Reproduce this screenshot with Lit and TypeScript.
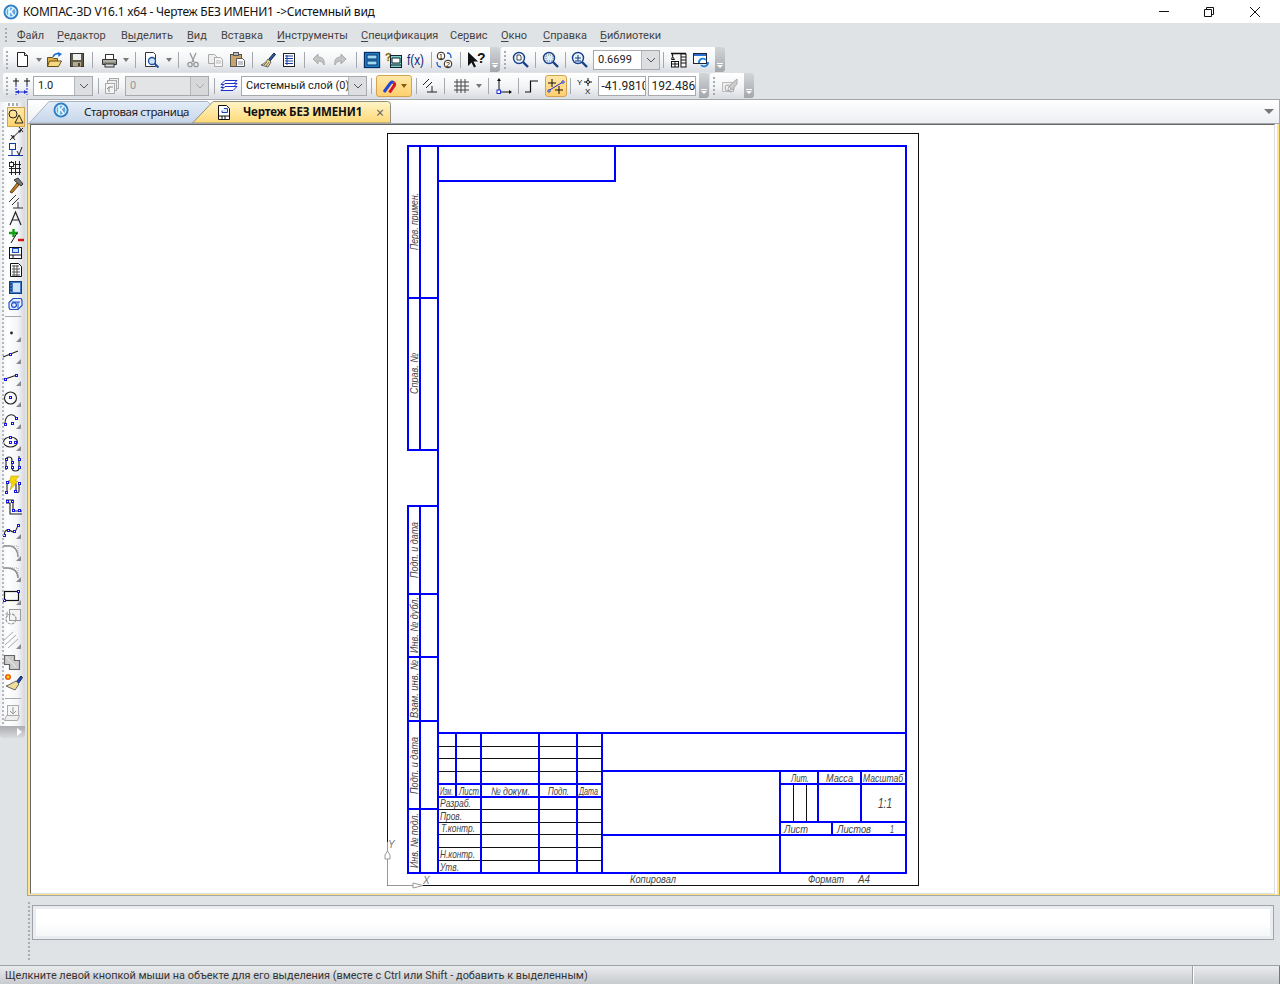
import { css, html, svg, LitElement, type TemplateResult, type SVGTemplateResult } from "lit";
import { customElement } from "lit/decorators.js";

type Cell = [number, number, TemplateResult | SVGTemplateResult];

const ico = (body: SVGTemplateResult, w = 16, h = 16) =>
    html`<svg class="ico" width=${w} height=${h} viewBox="0 0 ${w} ${h}">${body}</svg>`;

const sep = (c: number): Cell => [c, 1, html`<i class="sep"></i>`];
const drop = (c: number): Cell => [c, 7, html`<i class="drop"></i>`];
const grip = (c: number): Cell => [c, 2, html`<i class="grip"></i>`];
const cell = (c: number, body: SVGTemplateResult, w = 18): Cell => [c, w, ico(body, w, 18)];

// lays cells along a row by their centre x
function place(start: number, cells: Cell[]) {
    let prev = start;
    return cells.map(([c, w, t]) => {
        const left = c - w / 2 - prev;
        prev = c + w / 2;
        return html`<span class="cell" style="margin-left:${left}px;width:${w}px">${t}</span>`;
    });
}

const logo = html`<svg width="16" height="16" viewBox="0 0 16 16">
    <circle cx="8" cy="8" r="7.5" fill="#2f7fc4"/><circle cx="8" cy="8" r="5.6" fill="#5ba6dd"/>
    <circle cx="8" cy="8" r="5" fill="none" stroke="#fff" stroke-width="1"/>
    <text x="8" y="11.5" text-anchor="middle" font-family="Liberation Sans" font-weight="700" font-size="10" fill="#fff">K</text>
</svg>`;

const bodies = {
    file: svg`<path d="M3.5 1.5h7l3 3v11h-10z" fill="#fff" stroke="#222"/><path d="M10.5 1.5v3h3" fill="#ddd" stroke="#222"/>`,
    open: svg`<path d="M1.5 6.5h5l1 1h4v8h-10z" fill="#dcb24c" stroke="#6a4d10"/><path d="M3.5 10h12l-3 5.5h-11z" fill="#f6d985" stroke="#6a4d10"/><path d="M7 6c1-3 4-4 6.500-3" stroke="#1c6fd4" stroke-width="1.600" fill="none"/><path d="M16 3l-3.500 3-.5-5z" fill="#1c6fd4"/>`,
    save: svg`<rect x="1.500" y="2.500" width="13" height="13" fill="#5d5d4c" stroke="#333"/><rect x="4" y="3" width="8" height="6" fill="#eee"/><rect x="4" y="11" width="8" height="4.500" fill="#b8a888"/><rect x="9" y="12" width="2" height="3" fill="#444"/>`,
    print: svg`<rect x="4.500" y="3.500" width="8" height="5" fill="#fff" stroke="#333"/><path d="M1.500 8.500h14v5h-14z" fill="#8f8f84" stroke="#333"/><path d="M2 9.500h13v1H2z" fill="#cfcfc4"/><rect x="4" y="13" width="9" height="3" fill="#ddd" stroke="#333"/>`,
    preview: svg`<path d="M2.500 1.500h8l2 2v12h-10z" fill="#fff" stroke="#333"/><circle cx="9" cy="10" r="3.500" fill="#cfe6fa" stroke="#1f4f9e" stroke-width="1.300"/><path d="M11.500 12.500l4 4" stroke="#1f4f9e" stroke-width="2"/>`,
    cut: svg`<path d="M6 2l4 9M12 2L8 11" stroke="#9a9a9a" stroke-width="1.300" fill="none"/><circle cx="6" cy="13.500" r="2.200" fill="none" stroke="#9a9a9a" stroke-width="1.300"/><circle cx="12" cy="13.500" r="2.200" fill="none" stroke="#9a9a9a" stroke-width="1.300"/>`,
    copy: svg`<path d="M1.500 3.500h6l2 2v7h-8z" fill="#eee" stroke="#aaa"/><path d="M7.500 6.500h6l2 2v7h-8z" fill="#f6f6f6" stroke="#aaa"/><path d="M9 10h5M9 12h5" stroke="#bbb"/>`,
    paste: svg`<rect x="1.500" y="3.500" width="11" height="12" fill="#c9a36a" stroke="#555"/><rect x="4.500" y="1.500" width="5" height="3" fill="#bbb" stroke="#555"/><path d="M7.500 7.500h6l2 2v6h-8z" fill="#fff" stroke="#555"/><path d="M9 11h5M9 13h5" stroke="#889"/>`,
    brush: svg`<path d="M9 9l6-7 1.500 1.500L11 10z" fill="#2a5fb0" stroke="#123"/><path d="M9 8l3 3-3 5-7-2c3-1 5-3 7-6z" fill="#f1d67a" stroke="#666"/><path d="M5 14l3-3M7 15l3-4" stroke="#777"/>`,
    table: svg`<rect x="2.500" y="2.500" width="11" height="13" fill="#fff" stroke="#222"/><path d="M4 5h8M4 7.500h8M4 10h8M4 12.500h8" stroke="#1b3fa0"/><path d="M6 4v10" stroke="#1b3fa0"/>`,
    undo: svg`<path d="M2 8l5-5v3c5 0 7 3 6 8-1-3-3-4-6-4v3z" fill="#c4c4c4" stroke="#aaa"/>`,
    redo: svg`<path d="M14 8L9 3v3c-5 0-7 3-6 8 1-3 3-4 6-4v3z" fill="#c4c4c4" stroke="#aaa"/>`,
    cabinet: svg`<rect x="1.500" y="1.500" width="15" height="15" fill="#1d8fd0" stroke="#0c2a66" stroke-width="1.300"/><rect x="4" y="4" width="10" height="4" fill="#9fdcf5" stroke="#0c2a66"/><rect x="4" y="10" width="10" height="4" fill="#9fdcf5" stroke="#0c2a66"/>`,
    lib: svg`<text x="0" y="10" font-family="Liberation Sans" font-weight="700" font-size="11" fill="#222" stroke="#f0c419" stroke-width=".4">?</text><rect x="5.500" y="4.500" width="11" height="12" fill="#7fd0c8" stroke="#123"/><path d="M7 7h8v5H7z" fill="#fff" stroke="#123"/><path d="M6 14h10" stroke="#123"/>`,
    fx: svg`<text x="0" y="13.500" font-family="Liberation Sans" font-size="15" textLength="17" lengthAdjust="spacingAndGlyphs" fill="#14246e">f(x)</text>`,
    calc: svg`<circle cx="5" cy="5" r="3.800" fill="#fff" stroke="#222"/><circle cx="12" cy="13" r="3.800" fill="#fff" stroke="#222"/><text x="5" y="7.500" text-anchor="middle" font-family="Liberation Sans" font-size="7">1</text><text x="12" y="15.500" text-anchor="middle" font-family="Liberation Sans" font-size="7">2</text><path d="M11 2c3 0 4 1 4 5M1 11c0 4 1 5 4 5" stroke="#1c55c8" stroke-width="1.300" fill="none"/>`,
    help: svg`<path d="M1 1v14l3.500-3.500 2.500 5 2-1-2.500-5H11z" fill="#111"/><text x="10" y="12" font-family="Liberation Sans" font-weight="700" font-size="14" fill="#111">?</text>`,
    zoomPage: svg`<circle cx="7" cy="7" r="5.500" fill="#eaf4fd" stroke="#173f8a" stroke-width="1.400"/><path d="M11 11l5 5" stroke="#173f8a" stroke-width="2.400"/><path d="M5 4h3l1 1v4H5z" fill="#fff" stroke="#222" stroke-width=".8"/>`,
    zoomArea: svg`<circle cx="7" cy="7" r="5.500" fill="#dcedfb" stroke="#173f8a" stroke-width="1.400"/><path d="M11 11l5 5" stroke="#173f8a" stroke-width="2.400"/><rect x="4" y="4" width="7" height="6" fill="none" stroke="#666" stroke-width=".8" stroke-dasharray="1 1"/>`,
    zoomIn: svg`<circle cx="7" cy="7" r="5.500" fill="#eaf4fd" stroke="#173f8a" stroke-width="1.400"/><path d="M11 11l5 5" stroke="#173f8a" stroke-width="2.400"/><path d="M4 7h6M7 4v6M4 10h6" stroke="#173f8a"/>`,
    crane: svg`<path d="M1 2.500h15M2.500 2.500v3M12 2.500v12" stroke="#111" stroke-width="1.300"/><rect x="11" y="3" width="5" height="13" fill="#fff" stroke="#111"/><path d="M11 6h5M11 9h5M11 12h5" stroke="#111"/><rect x="1.500" y="10.500" width="7" height="5.500" fill="#fff" stroke="#111"/><path d="M1 13h8M5 10v6M2.500 5.500l-1 3h3z" stroke="#111" fill="none"/>`,
    refresh: svg`<rect x="1.500" y="2.500" width="13" height="10" fill="#fff" stroke="#223"/><rect x="2" y="3" width="12" height="2" fill="#2a6fd8"/><path d="M7 12a4 4 0 0 1 7-3M16 11a4 4 0 0 1-7 3" stroke="#1c7fe0" stroke-width="1.800" fill="none"/>`,
    dim: svg`<path d="M4 1v7M1 4h6M15 1v7M12 4h6" stroke="#111"/><path d="M4 8v10M15 8v10" stroke="#1c2fd0" stroke-dasharray="2 1"/><path d="M4 15h11" stroke="#1c2fd0"/><path d="M4 15l3-2v4zM15 15l-3-2v4z" fill="#1c2fd0"/>`,
    order: svg`<rect x="6.500" y="1.500" width="9" height="10" fill="#eee" stroke="#aaa"/><rect x="4.500" y="3.500" width="9" height="10" fill="#eee" stroke="#aaa"/><rect x="2.500" y="6.500" width="9" height="10" fill="#f4f4f4" stroke="#aaa"/><path d="M6 15V10l-2 2M6 10h4" stroke="#888" fill="none"/>`,
    layers: svg`<path d="M5 3.500h12l-4 4H1z" fill="#fff" stroke="#2030d0"/><path d="M5 6.500h12l-4 4H1z" fill="#fff" stroke="#2030d0"/><path d="M5 9.500h12l-4 4H1z" fill="#fff" stroke="#2030d0"/><path d="M1 13.500h12" stroke="#2030d0"/>`,
    magnet: svg`<path d="M3 14L9.500 5Q11 3.500 12.500 4.500" fill="none" stroke="#2347d8" stroke-width="3"/><path d="M12.500 4.500Q14.500 6 13 8L8.500 14.500" fill="none" stroke="#d6162a" stroke-width="3"/>`,
    para: svg`<path d="M1 8l6-6M4 11l6-6M10 9v6M5 15h10" stroke="#222" fill="none"/>`,
    grid: svg`<path d="M1 5h15M1 9h15M1 13h15M4 2v14M8 2v14M12 2v14" stroke="#444"/>`,
    axes: svg`<path d="M4 15V3" stroke="#111"/><path d="M4 1l-2 3h4z" fill="#111"/><path d="M4 15h12" stroke="#111"/><path d="M17 15l-3-2v4z" fill="#111"/><rect x="2" y="13" width="3.500" height="3.500" fill="#fff" stroke="#1c2fd0"/>`,
    ortho: svg`<path d="M1 15h5.500V4H14" stroke="#111" fill="none" stroke-width="1.200"/>`,
    snap: svg`<path d="M1 14l15-9" stroke="#1c2fd0"/><path d="M5 2v8M1 6h8M12 9v8M8 13h8" stroke="#111"/><circle cx="16" cy="5" r="1.200" fill="#fff" stroke="#1c2fd0"/><circle cx="2" cy="14" r="1.200" fill="#fff" stroke="#1c2fd0"/>`,
    coord: svg`<text x="0" y="8" font-family="Liberation Sans" font-size="8" fill="#111">Y</text><text x="8" y="17" font-family="Liberation Sans" font-size="8" fill="#111">X</text><path d="M11 1v8M7 5h8" stroke="#111"/><circle cx="11" cy="5" r="1.500" fill="#fff" stroke="#111"/>`,
    ghost: svg`<path d="M1.500 5.500h11v9h-11z" fill="#eee" stroke="#bbb"/><circle cx="7" cy="11" r="3" fill="none" stroke="#aaa"/><circle cx="10" cy="12" r="3" fill="none" stroke="#aaa"/><path d="M8 9l8-7v5l-5 6z" fill="#ccc" stroke="#aaa"/>`,
};

const tri = svg`<path d="M20 14v5h-5z" fill="#8a8a8a"/>`;
// small edit handle: 3px box with a white centre
const node = (x: number, y: number) => svg`<rect x=${x - 0.5} y=${y - 0.5} width="2" height="2" fill="#fff" stroke="#1414e0"/>`;
const blk = "#111";

const rail = {
    select: svg`<circle cx="7" cy="7" r="4" fill="none" stroke="#222"/><path d="M9 16l4-8 4 8z" fill="none" stroke="#222"/>`,
    dims: svg`<path d="M4 16L17 4" stroke="#222"/><path d="M5 11l4 5M13 3l4 5" stroke="#222"/><path d="M5 15l4-2-2-2zM16 5l-4 2 2 2z" fill="#222"/>`,
    rough: svg`<path d="M6 9v6" stroke="#123aa0"/><rect x="3.500" y="3.500" width="6" height="6" fill="none" stroke="#123aa0"/><path d="M2 15.500h15" stroke="#123aa0"/><path d="M11 11l2 4 3-8" stroke="#222" fill="none"/>`,
    hash: svg`<path d="M3 6.500h12M3 10.500h12M3 14.500h12M5.500 3v14M9.500 3v14M13.500 3v14" stroke="#222"/><rect x="3.500" y="4.500" width="4" height="4" fill="#fff" stroke="#222"/>`,
    hammer: svg`<path d="M4 17L11 8l2 2-7 8z" fill="#b97a2a" stroke="#6a4410"/><path d="M8 5l4-2 5 6-2 2z" fill="#777" stroke="#333"/>`,
    perp: svg`<path d="M3 10l7-7M6 13l7-7M12 10v6M7 16h10" stroke="#333" fill="none"/>`,
    compass: svg`<path d="M4 16l5.500-13L15 16M6 11h7" stroke="#222" fill="none" stroke-width="1.200"/>`,
    plus: svg`<path d="M3 7h9M7.500 3v8" stroke="#11a011" stroke-width="2.400"/><path d="M5 17l6-10" stroke="#111"/><path d="M12 14h6" stroke="#d01414" stroke-width="2.400"/>`,
    view: svg`<rect x="3.500" y="4.500" width="12" height="11" fill="#fff" stroke="#111"/><rect x="6.500" y="5.500" width="6" height="4" fill="#cfe2fa" stroke="#1c4fc8"/><path d="M4 12h11M7 12v3" stroke="#111"/>`,
    sheet: svg`<path d="M4.500 3.500h8l3 3v10h-11z" fill="#fff" stroke="#111"/><path d="M6 6h7M6 9h8M6 12h8M6 15h8M8 5v11M11 5v11" stroke="#555"/>`,
    panel: svg`<rect x="3.500" y="4.500" width="12" height="12" fill="#3f7cc4" stroke="#143a80"/><rect x="7" y="6" width="7" height="9" fill="#cfe2fa"/><path d="M4 7h2M4 10h2M4 13h2" stroke="#0a1c48"/>`,
    solid: svg`<path d="M7 4.500h8l1 2v5l-4 4H4l-1-2v-5z" fill="#e8f0ff" stroke="#1c4fc8" stroke-width="1.200"/><circle cx="8" cy="11" r="2.400" fill="none" stroke="#1c4fc8" stroke-width="1.200"/><path d="M6 8h8M12 8v7" stroke="#1c4fc8"/>`,
    point: svg`<circle cx="10.500" cy="10" r="1.400" fill="#222"/>${tri}`,
    line: svg`<path d="M2 12l15-6" stroke="#222" stroke-width="1.100"/>${node(9, 9)}${tri}`,
    seg: svg`<path d="M4 12l12-4" stroke="#222" stroke-width="1.100"/>${node(4, 12)}${node(15, 8)}${tri}`,
    circle: svg`<circle cx="9.500" cy="10" r="6" fill="none" stroke="#222" stroke-width="1.100"/>${node(9, 9)}${tri}`,
    arc: svg`<path d="M4 14c0-11 9-11 11-6" fill="none" stroke="#222" stroke-width="1.100"/>${node(4, 14)}${node(11, 13)}${node(15, 8)}${tri}`,
    ellipse: svg`<ellipse cx="9.500" cy="10" rx="7" ry="5" fill="none" stroke="#222" stroke-width="1.100"/>${node(9, 5)}${node(9, 10)}${node(14, 10)}${tri}`,
    spline: svg`<path d="M5 17V7c0-4 6-4 6 0v8c0 4 7 4 7 0V3" fill="none" stroke="#222" stroke-width="1.100"/>${node(5, 6)}${node(5, 14)}${node(11, 9)}${node(11, 14)}${node(18, 6)}${node(18, 14)}`,
    bolt: svg`<path d="M6 18V10c0-6 9-6 9 0v6c0 2 3 2 3 0V8" fill="none" stroke="#222" stroke-width="1.100"/><path d="M10 1h8l-4 5h3l-8 9 2-7H8z" fill="#f6d50a" stroke="#b89a00" stroke-width=".5"/>${node(6, 7)}${node(5, 17)}${node(14, 16)}${node(18, 8)}`,
    poly: svg`<path d="M5 3h7v11h9M5 6h4v11h12" fill="none" stroke="#222" stroke-width="1.100"/>${node(6, 4)}${node(11, 4)}${node(12, 13)}${node(18, 13)}`,
    curve: svg`<path d="M3 15c1-6 4-6 7-4s6 0 7-7" fill="none" stroke="#222" stroke-width="1.100"/>${node(3, 15)}${node(7, 10)}${node(13, 11)}${node(17, 5)}${tri}`,
    chamfer: svg`<path d="M2 4h7c4 0 8 4 8 11" fill="none" stroke="#888" stroke-width="1.500"/><path d="M9 4h8v11" fill="none" stroke="#aaa" stroke-dasharray="1 1"/>${tri}`,
    fillet: svg`<path d="M2 5h5c6 0 10 4 10 10" fill="none" stroke="#888" stroke-width="1.500"/><path d="M7 5h10v10" fill="none" stroke="#aaa" stroke-dasharray="1 1"/>${tri}`,
    rect: svg`<rect x="3.500" y="5.500" width="14" height="9" fill="none" stroke="#111" stroke-width="1.200"/>${node(3, 14)}${node(17, 5)}${tri}`,
    poly2: svg`<rect x="8.500" y="2.500" width="11" height="11" fill="#f4f4f4" stroke="#999"/><circle cx="10" cy="12" r="5" fill="none" stroke="#999" stroke-width="1.200" stroke-dasharray="3 1"/><path d="M4 7l3-3v6z" fill="#bbb"/>`,
    hatch: svg`<path d="M2 11L12 2M4 15L15 5M7 18l10-9" stroke="#aaa" fill="none"/>${tri}`,
    fill: svg`<path d="M3.500 3.500h10v5h5v9h-10v-5h-5z" fill="#ccc" stroke="#666" stroke-width="1.200"/><path d="M5 5l6 6M9 9l6 6" stroke="#eee"/>`,
    splash: svg`<path d="M15 9l5-6 1.500 1.500L17 11z" fill="#2347d8" stroke="#123"/><path d="M15 8l3 3-4 6-9-4c3-1 6-3 10-5z" fill="#eede9a" stroke="#666"/><circle cx="7" cy="4" r="3" fill="#f05a14"/><circle cx="7" cy="4" r="1.400" fill="#ffd800"/>`,
    ins: svg`<rect x="6.500" y="2.500" width="11" height="10" fill="#f4f4f4" stroke="#aaa"/><path d="M12 4v6M9 8l3 3 3-3" stroke="#999" fill="none"/><path d="M5.500 12.500h13l-2 5h-13z" fill="#eee" stroke="#aaa"/>`,
};

const row1 = [
    grip(7),
    cell(23, bodies.file), drop(39), cell(55, bodies.open), cell(78, bodies.save), sep(92),
    cell(110, bodies.print), drop(126), sep(135), cell(152, bodies.preview), drop(169), sep(178),
    cell(193, bodies.cut), cell(216, bodies.copy), cell(238, bodies.paste), sep(252),
    cell(268, bodies.brush), cell(290, bodies.table), sep(304),
    cell(320, bodies.undo), cell(341, bodies.redo), sep(356),
    cell(372, bodies.cabinet), cell(394, bodies.lib), cell(416, bodies.fx), sep(431),
    cell(445, bodies.calc), sep(460), cell(476, bodies.help),
];
const row1b = [
    grip(505), cell(521, bodies.zoomPage), sep(535), cell(551, bodies.zoomArea), sep(565), cell(580, bodies.zoomIn),
];
const row2 = [grip(7), cell(21, bodies.dim)];

const railTop: [number, SVGTemplateResult][] = [
    [117, rail.select], [134, rail.dims], [150, rail.rough], [168, rail.hash], [185, rail.hammer], [202, rail.perp],
    [219, rail.compass], [236, rail.plus], [253, rail.view], [270, rail.sheet], [287, rail.panel], [304, rail.solid],
];
const railBottom: [number, SVGTemplateResult][] = [
    [333, rail.point], [355, rail.line], [377, rail.seg], [398, rail.circle], [420, rail.arc], [442, rail.ellipse],
    [463, rail.spline], [485, rail.bolt], [507, rail.poly], [530, rail.curve], [552, rail.chamfer], [573, rail.fillet],
    [596, rail.rect], [617, rail.poly2], [640, rail.hatch], [662, rail.fill], [683, rail.splash],
];

// text before the mnemonic, the mnemonic, text after, column width
const MENU: [string, string, string, number][] = [
    ["", "Ф", "айл", 40], ["", "Р", "едактор", 64], ["В", "ы", "делить", 66], ["", "В", "ид", 34], ["Вст", "а", "вка", 56],
    ["", "И", "нструменты", 84], ["", "С", "пецификация", 89], ["Се", "р", "вис", 51], ["", "О", "кно", 42], ["", "С", "правка", 57], ["", "Б", "иблиотеки", 70],
];

// drawing frame in page coordinates
const THICK: number[][] = [
    [408, 146, 906, 146], [906, 146, 906, 873], [408, 873, 906, 873], [438, 146, 438, 873],
    [438, 181, 615, 181], [615, 146, 615, 181],
    [408, 146, 408, 450], [420, 146, 420, 450], [408, 298, 438, 298], [408, 450, 438, 450],
    [408, 506, 408, 873], [420, 506, 420, 873], [408, 506, 438, 506], [408, 594, 438, 594], [408, 657, 438, 657], [408, 721, 438, 721], [408, 809, 438, 809],
    [438, 733, 906, 733], [456, 733, 456, 797], [481, 733, 481, 873], [539, 733, 539, 873], [577, 733, 577, 873], [602, 733, 602, 873],
    [438, 784, 602, 784], [438, 797, 602, 797],
    [602, 771, 906, 771], [602, 835, 906, 835], [780, 771, 780, 873], [780, 784, 906, 784], [780, 822, 906, 822],
    [818, 771, 818, 822], [861, 771, 861, 822], [832, 822, 832, 835],
];
const THIN: number[][] = [
    ...[746.5, 758.5, 771.5].map(y => [438, y, 602, y]),
    ...[809.5, 822.5, 834.5, 847.5, 860.5].map(y => [438, y, 602, y]),
    [793.5, 784, 793.5, 822], [806.5, 784, 806.5, 822],
];
const LABELS: [number, number, number, string, number?][] = [
    [440, 453, 795, "Изм."], [459, 479, 795, "Лист"], [491, 530, 795, "№ докум."], [548, 569, 795, "Подп."], [579, 598, 795, "Дата"],
    [440, 471, 807, "Разраб."], [440, 462, 820, "Пров."], [441, 475, 832, "Т.контр."], [440, 475, 858, "Н.контр."], [440, 459, 871, "Утв."],
    [791, 809, 782, "Лит."], [826, 853, 782, "Масса"], [863, 903, 782, "Масштаб"], [878, 892, 808, "1:1", 15],
    [784, 808, 833, "Лист"], [837, 871, 833, "Листов"], [890, 894, 833, "1"],
    [630, 676, 883, "Копировал"], [808, 844, 883, "Формат"], [858, 870, 883, "А4"],
];
const SIDE: [number, number, string][] = [
    [193, 250, "Перв. примен."], [353, 394, "Справ. №"], [522, 578, "Подп. и дата"], [597, 653, "Инв. № дубл."],
    [660, 718, "Взам. инв. №"], [737, 794, "Подп. и дата"], [813, 868, "Инв. № подл."],
];

@customElement("app-root")
export class AppRoot extends LitElement {

    static styles = css`
        :host {
            display: flex;
            flex-direction: column;
            height: 984px;
            width: 1280px;
            overflow: hidden;
            background: #e0e3e6;
            font-family: "Noto Sans", sans-serif;
            color: #222;
        }

        .title {
            height: 23px;
            background: #fff;
            display: flex;
            align-items: center;
            padding-left: 3px;
            font-size: 12px;
            color: #111;
        }
        .title .name { margin-left: 4px; letter-spacing: -0.23px; flex: 1; }
        .win { display: block; margin-right: 19px; }

        .menu {
            height: 24px;
            display: flex;
            align-items: center;
            box-sizing: border-box;
            font-family: Roboto, sans-serif;
            font-size: 11px;
            color: #444;
        }
        .menu .grip { margin: 0 10px 0 5px; height: 14px; }
        .menu span { flex: none; }
        .menu u { text-underline-offset: 2px; }

        .bar { height: 26px; display: flex; }
        .panel {
            display: flex;
            align-items: center;
            height: 25px;
            border-radius: 3px 0 0 3px;
            background: linear-gradient(#fff, #f2f4f6 55%, #d9dce2);
        }
        .chip {
            position: relative;
            width: 10px;
            height: 25px;
            border-radius: 0 3px 3px 0;
            background: linear-gradient(#d3d6d9, #a3a6ab);
        }
        .chip::after {
            content: "";
            position: absolute;
            left: 2px;
            bottom: 4px;
            width: 6px;
            height: 1px;
            border-top: 1px solid #fff;
            border-bottom: 3px solid #fff;
            clip-path: polygon(0 0, 100% 0, 100% 40%, 50% 100%, 0 40%);
        }
        .cell { display: flex; align-items: center; justify-content: center; flex: none; }
        .ico { display: block; flex: none; overflow: visible; }
        .sep { display: block; width: 1px; height: 16px; background: #a5a8ad; }
        .drop {
            display: block;
            border-top: 4px solid #777;
            border-left: 3.5px solid transparent;
            border-right: 3.5px solid transparent;
        }
        .grip {
            display: block;
            width: 2px;
            height: 18px;
            background: repeating-linear-gradient(#a9acb1 0 2px, transparent 2px 4px);
        }

        .combo {
            display: flex;
            flex: none;
            height: 18px;
            border: 1px solid #a6a9ad;
            background: #fff;
            font-family: Roboto, sans-serif;
            font-size: 11px;
            line-height: 18px;
        }
        .combo .val { flex: 1; padding-left: 4px; overflow: hidden; white-space: nowrap; }
        .combo .arr { width: 17px; background: #dcdee1; border-left: 1px solid #b4b7ba; display: flex; align-items: center; justify-content: center; }
        .combo.off { background: #e2e4e6; color: #999; }
        .combo.off .arr { background: #d6d8da; }
        .combo.num { font-size: 12px; }
        .combo.num .val { padding-left: 3px; }
        .hot {
            display: flex;
            align-items: center;
            flex: none;
            height: 20px;
            border: 1px solid #d3a350;
            border-radius: 3px;
            background: linear-gradient(#ffe9a8, #ffcf6e);
        }

        .main { flex: 1; display: flex; min-height: 0; }
        .rail { width: 27px; flex: none; position: relative; }
        .rail-body {
            width: 25px;
            margin-top: 3px;
            height: 624px;
            background: linear-gradient(90deg, #eef0f3, #fff 30%, #f4f5f7 70%, #d4d7dc);
            display: flex;
            flex-direction: column;
            position: relative;
        }
        .rail-head {
            height: 3px;
            margin: 1px 0 0 8px;
            width: 12px;
            background: repeating-linear-gradient(90deg, #a9acb1 0 2px, transparent 2px 4px);
        }
        .rail-item { flex: none; display: flex; padding-left: 1px; }
        .rail-item svg { overflow: visible; }
        .rail-item.on { padding-left: 8px; }
        .rail-item.active svg { background: linear-gradient(#ffe9a8, #ffd36e); outline: 1px solid #d3a350; }
        .rail-sep { height: 1px; width: 16px; background: #aaa; margin-left: 5px; flex: none; }
        .rail-grip {
            position: absolute;
            left: 2px;
            top: 8px;
            bottom: 2px;
            width: 2px;
            background: repeating-linear-gradient(#b5b8bc 0 2px, transparent 2px 4px);
        }
        .rail-chip {
            position: relative;
            width: 25px;
            height: 12px;
            border-radius: 0 0 3px 3px;
            background: linear-gradient(#a9acb0, #d8dade);
        }
        .rail-chip::after {
            content: "";
            position: absolute;
            left: 17px;
            top: 2px;
            border-left: 5px solid #fff;
            border-top: 4px solid transparent;
            border-bottom: 4px solid transparent;
        }

        .work { flex: 1; display: flex; flex-direction: column; min-width: 0; }
        .tabs {
            height: 24px;
            flex: none;
            display: flex;
            align-items: flex-end;
            border-top: 1px solid #a3a6ab;
            border-right: 1px solid #a3a6ab;
            border-left: 1px solid #a3a6ab;
            box-sizing: border-box;
            background: linear-gradient(#fff, #eceef3);
            font-size: 11.5px;
        }
        .tab {
            position: relative;
            height: 22px;
            display: flex;
            align-items: center;
            flex: none;
            color: #222;
            padding-bottom: 1px;
            box-sizing: border-box;
        }
        .tab svg.shape { position: absolute; left: 0; top: 0; }
        .tab > *:not(.shape) { position: relative; }
        .tab.home { width: 183px; margin-left: 1px; }
        .tab.home .logo { margin-left: 24px; }
        .tab.home .txt { margin-left: 15px; letter-spacing: -.42px; }
        .tab.doc { width: 199px; margin-left: -20px; font-weight: 700; }
        .tab.doc .page { margin-left: 24px; }
        .tab.doc .txt { margin-left: 11px; color: #111; letter-spacing: -.17px; }
        .tab.doc .x { position: absolute; right: 7px; top: 2px; color: #666; font-weight: 400; font-size: 14px; }
        .tab-menu {
            margin: 0 5px 9px auto;
            border-top: 5px solid #777;
            border-left: 5px solid transparent;
            border-right: 5px solid transparent;
        }

        .canvas {
            flex: 1;
            min-height: 0;
            box-sizing: border-box;
            background: #fff;
            border: solid #ffe488;
            border-width: 1px 3px 2px 3px;
            outline: 1px solid #a3a6ab;
            outline-offset: -1px;
        }
        .canvas svg { display: block; border-top: 1px solid #666; border-left: 1px solid #666; border-right: 1px solid #ddd; border-bottom: 1px solid #ddd; }

        .cmd { height: 69px; flex: none; display: flex; position: relative; }
        .cmd .grip { position: absolute; left: 1px; top: 6px; height: 58px; }
        .cmd .box {
            box-sizing: border-box;
            margin: 9px 6px 0 5px;
            flex: 1;
            height: 35px;
            border: 1px solid #a0a3a8;
            box-shadow: inset 0 0 0 3px #e9ecf0;
            background: linear-gradient(#fff 50%, #f2f4f6);
        }

        .status {
            height: 19px;
            box-sizing: border-box;
            border-top: 1px solid #9da0a5;
            background: linear-gradient(#e9ebed, #c8cbcf);
            font-family: Roboto, sans-serif;
            font-size: 10.9px;
            color: #333;
            display: flex;
            align-items: center;
        }
        .status .msg { flex: 1; padding: 1px 0 0 5px; white-space: nowrap; }
        .status .pane { width: 86px; height: 100%; border-left: 1px solid #9da0a5; box-shadow: inset 1px 0 #fff; }
        .status .end { width: 1px; height: 100%; background: #777; }

        .d-text { font-family: "Liberation Sans", sans-serif; font-style: italic; font-size: 11px; fill: #444; }
    `;

    private combo(value: string, width: number, off = false, left = 0) {
        return html`<span class="combo ${off ? "off" : ""}" style="width:${width}px;margin-left:${left}px">
            <span class="val">${value}</span>
            <span class="arr">${ico(svg`<path d="M1 2l4 4 4-4" fill="none" stroke=${off ? "#aaa" : "#555"}/>`, 10, 8)}</span>
        </span>`;
    }

    private input(value: string, width: number, left: number) {
        return html`<span class="combo num" style="width:${width}px;margin-left:${left}px"><span class="val">${value}</span></span>`;
    }

    private renderDrawing() {
        return html`<svg width="1243" height="768" viewBox="31 125 1243 768">
            <rect x="387.500" y="133.500" width="531" height="752" fill="#fff" stroke="#111" stroke-width="1"/>
            ${THIN.map(([a, b, c, d]) => svg`<line x1=${a} y1=${b} x2=${c} y2=${d} stroke=${blk} stroke-width="1"/>`)}
            ${THICK.map(([a, b, c, d]) => svg`<line x1=${a} y1=${b} x2=${c} y2=${d} stroke="#0000ff" stroke-width="2" stroke-linecap="square"/>`)}
            ${LABELS.map(([a, b, y, t, size]) => svg`<text class="d-text" x=${a} y=${y} textLength=${b - a} lengthAdjust="spacingAndGlyphs" style=${size ? `font-size:${size}px` : ""}>${t}</text>`)}
            ${SIDE.map(([a, b, t]) => svg`<text class="d-text" transform="translate(418 ${b}) rotate(-90)" textLength=${b - a} lengthAdjust="spacingAndGlyphs">${t}</text>`)}
            <path d="M387.500 842V885.500H423" fill="none" stroke="#999" stroke-width="1"/>
            <path d="M385 859h5v-4l-2.500-4-2.500 4zM413 883v5l10-2.500z" fill="#fff" stroke="#999"/>
            <text x="388" y="848" font-family="Liberation Sans" font-size="10" font-style="italic" fill="#777">Y</text>
            <text x="423" y="884" font-family="Liberation Sans" font-size="10" font-style="italic" fill="#777">X</text>
        </svg>`;
    }

    private renderRail() {
        let prev = 102 + 4;
        const items = (list: [number, SVGTemplateResult][], offset: string) => list.map(([cy, body], i) => {
            const top = cy - 9 - prev;
            prev = cy + 9;
            const active = offset === "on" && i === 0;
            return html`<span class="rail-item ${offset} ${active ? "active" : ""}" style="margin-top:${top}px">
                ${offset === "on"
                    ? html`<svg width="16" height="18" viewBox="2 1 16 18">${body}</svg>`
                    : html`<svg width="22" height="18" viewBox="0 1 22 18">${body}</svg>`}
            </span>`;
        });
        const top = items(railTop, "on");
        const sepTop = 316 - prev;
        prev = 317;
        const bottom = items(railBottom, "");
        const sepBottom = 698 - prev;
        prev = 699;
        const last = items([[713, rail.ins]], "");
        return html`<div class="rail">
            <div class="rail-body">
                <div class="rail-grip"></div>
                <div class="rail-head"></div>
                ${top}
                <div class="rail-sep" style="margin-top:${sepTop}px"></div>
                ${bottom}
                <div class="rail-sep" style="margin-top:${sepBottom}px"></div>
                ${last}
            </div>
            <div class="rail-chip"></div>
        </div>`;
    }

    render() {
        return html`
            <div class="title">
                ${logo}
                <span class="name">КОМПАС-3D V16.1 x64 - Чертеж БЕЗ ИМЕНИ1 -&gt;Системный вид</span>
                <svg class="win" width="102" height="12" viewBox="0 0 102 12" style="margin-right:19px">
                    <path d="M0 5.500h10" stroke="#111"/>
                    <path d="M45.500 3.500h7v7h-7zM47.500 3.500v-2h7v7h-2" fill="none" stroke="#111"/>
                    <path d="M91 1l10 10M101 1L91 11" stroke="#111"/>
                </svg>
            </div>

            <div class="menu">
                <i class="grip"></i>
                ${MENU.map(([a, b, c, w]) => html`<span style="width:${w}px">${a}<u>${b}</u>${c}</span>`)}
            </div>

            <div class="bar">
                <div class="panel" style="margin-left:3px;width:487px">${place(3, row1)}</div>
                <div class="chip"></div>
                <div class="panel" style="margin-left:1px;width:214px">
                    ${place(501, row1b)}
                    ${this.combo("0.6699", 65, false, 4)}
                    ${place(660, [sep(663), cell(679, bodies.crane), cell(701, bodies.refresh)])}
                </div>
                <div class="chip"></div>
            </div>

            <div class="bar">
                <div class="panel" style="margin-left:3px;width:696px">
                    ${place(3, row2)}
                    ${this.combo("1.0", 58, false, 3)}
                    ${place(93, [sep(98), cell(112, bodies.order)])}
                    ${this.combo("0", 82, true, 4)}
                    ${place(209, [sep(214), cell(229, bodies.layers)])}
                    ${this.combo("Системный слой (0)", 124, false, 3)}
                    ${place(367, [sep(371)])}
                    <span class="hot" style="width:34px;margin-left:4px">
                        <span class="cell" style="width:24px">${ico(bodies.magnet, 16, 16)}</span>
                        <i class="drop" style="border-top-color:#8a5a10"></i>
                    </span>
                    ${place(411, [sep(416), cell(430, bodies.para), sep(444), cell(461, bodies.grid), drop(478), sep(488), cell(503, bodies.axes), sep(518), cell(532, bodies.ortho)])}
                    <span class="hot" style="width:20px;margin-left:3px;justify-content:center">${ico(bodies.snap, 17, 18)}</span>
                    ${place(566, [sep(570), cell(585, bodies.coord)])}
                    ${this.input("-41.9810", 46, 3)}
                    ${this.input("192.486", 46, 2)}
                </div>
                <div class="chip"></div>
                <div class="panel" style="margin-left:1px;width:34px">
                    ${place(710, [grip(714), cell(730, bodies.ghost)])}
                </div>
                <div class="chip"></div>
            </div>

            <div class="main">
                ${this.renderRail()}
                <div class="work">
                    <div class="tabs">
                        <div class="tab home">
                            <svg class="shape" width="183" height="22">
                                <defs><linearGradient id="hg" x1="0" y1="0" x2="0" y2="1"><stop offset="0" stop-color="#e4edf8"/><stop offset="1" stop-color="#c6d6ea"/></linearGradient></defs>
                                <path d="M.5 22 20 .5H178.500L183 5V22z" fill="url(#hg)" stroke="#a9b4c2"/>
                            </svg>
                            <span class="logo">${logo}</span>
                            <span class="txt">Стартовая страница</span>
                        </div>
                        <div class="tab doc">
                            <svg class="shape" width="199" height="22">
                                <defs><linearGradient id="dg" x1="0" y1="0" x2="0" y2="1"><stop offset="0" stop-color="#fff5c8"/><stop offset="1" stop-color="#ffd877"/></linearGradient></defs>
                                <path d="M.5 22 21 .5H195.500Q198.500 .5 198.500 3.500V22z" fill="url(#dg)" stroke="#8f8f80"/>
                            </svg>
                            <span class="page">${ico(svg`<path d="M2.500 1.500h8l3 3v11h-11z" fill="#fff" stroke="#111"/><path d="M8 4.500h3.500v4H6v-2" fill="#dfeafa" stroke="#1c3fc0"/><path d="M3 12h10M6 12v3M9 12v3" stroke="#111"/>`)}</span>
                            <span class="txt">Чертеж БЕЗ ИМЕНИ1</span>
                            <span class="x">×</span>
                        </div>
                        <i class="tab-menu"></i>
                    </div>
                    <div class="canvas">${this.renderDrawing()}</div>
                    <div class="cmd">
                        <i class="grip"></i>
                        <div class="box"></div>
                    </div>
                </div>
            </div>

            <div class="status">
                <span class="msg">Щелкните левой кнопкой мыши на объекте для его выделения (вместе с Ctrl или Shift - добавить к выделенным)</span>
                <span class="pane"></span>
                <span class="end"></span>
            </div>
        `;
    }
}
